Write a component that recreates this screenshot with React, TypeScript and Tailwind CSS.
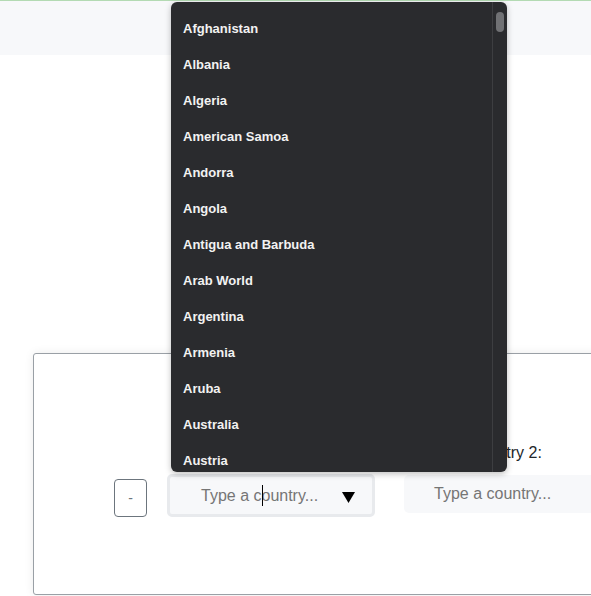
import React from "react";

const countries = [
  "Afghanistan",
  "Albania",
  "Algeria",
  "American Samoa",
  "Andorra",
  "Angola",
  "Antigua and Barbuda",
  "Arab World",
  "Argentina",
  "Armenia",
  "Aruba",
  "Australia",
  "Austria",
];

export default function App() {
  return (
    <div className="relative w-[591px] h-[596px] overflow-hidden bg-white font-['Liberation_Sans',Arial,sans-serif]">
      <div className="h-px bg-[#b3dab3]" />
      <div className="h-[54px] bg-[#f7f8fa]" />

      <div className="mt-[298px] ml-[33px] w-[620px] h-[242px] rounded-[3px] border border-[#9aa0a6] shadow-[0_0_10px_rgba(0,0,0,0.08)] bg-white pt-[87px] pl-[80px]">
        <div className="flex items-start">
          <div className="mt-[38px] w-[33px] h-[38px] rounded-[4px] border border-[#6c757d] flex items-center justify-center text-[14px] text-[#6c757d]">
            -
          </div>
          <div className="ml-[20px] w-[208px] flex flex-col">
            <div className="h-6 flex items-center justify-center text-[16px] text-[#212529]">Country 1:</div>
            <div className="relative mt-[9px] h-[43px] rounded-[5px] border-[3px] border-[#e8eaed] bg-[#f7f8fa] flex items-center pl-[31px] text-[16px] text-[#757575]">
              Type a country...
              <span className="absolute left-[92px] top-[8px] w-px h-[21px] bg-black" />
              <svg className="absolute left-[172px] top-[15px]" width="13" height="11" viewBox="0 0 13 11">
                <polygon points="0,0 13,0 6.5,11" fill="#000" />
              </svg>
            </div>
          </div>
          <div className="ml-[29px] w-[208px] flex flex-col">
            <div className="h-6 flex items-center justify-center text-[16px] text-[#212529] pr-[6px]">Country 2:</div>
            <div className="mt-[10px] h-[38px] rounded-[5px] bg-[#f7f8fa] flex items-center pl-[30px] text-[16px] text-[#757575]">
              Type a country...
            </div>
          </div>
        </div>
      </div>

      <div className="absolute left-[171px] top-[2px] w-[336px] h-[470px] rounded-[6px] bg-[#2a2b2e] shadow-[0_2px_6px_rgba(0,0,0,0.25)] overflow-hidden flex">
        <div className="flex-1 pt-[9px] pl-[12px]">
          {countries.map((c) => (
            <div key={c} className="h-[36px] flex items-center text-[13px] font-bold text-[#f2f2f2]">
              {c}
            </div>
          ))}
        </div>
        <div className="w-[15px] border-l border-[#3d3e41] pt-[10px] pl-[3px]">
          <div className="w-[8px] h-[20px] rounded-full bg-[#707174]" />
        </div>
      </div>
    </div>
  );
}
